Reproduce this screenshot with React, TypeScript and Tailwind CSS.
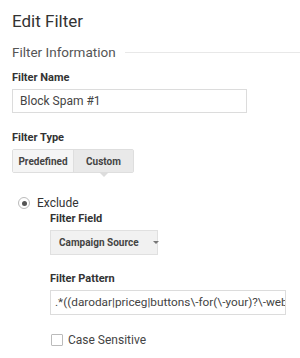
import React from "react";

const Label = ({ children, className = "" }: { children: React.ReactNode; className?: string }) => (
  <div className={`text-[11px] leading-[14px] font-bold text-[#333] ${className}`}>{children}</div>
);

export default function App() {
  return (
    <div className="w-[300px] h-[358px] overflow-hidden bg-white pl-3 pt-[11px] font-['Roboto',sans-serif]">
      <h1 className="text-[17px] leading-5 text-[#333]">Edit Filter</h1>

      <div className="mt-[13px] flex items-center h-4">
        <span className="text-[13.5px] leading-4 text-[#555]">Filter Information</span>
        <div className="ml-[9px] h-px flex-1 bg-[#e8e8e8]" />
      </div>

      <Label className="mt-[11px]">Filter Name</Label>
      <div className="mt-1 w-[235px] h-6 border border-[#dcdcdc] pl-[7px] text-[12px] leading-[22px] text-[#444]">
        Block Spam #1
      </div>

      <Label className="mt-[18px]">Filter Type</Label>
      <div className="mt-1 flex h-6 w-fit border border-[#dedede] rounded-[2px] text-[10px] font-bold text-[#444]">
        <div className="w-[60px] flex items-center justify-center bg-[#f5f5f5]">Predefined</div>
        <div className="relative w-[60px] flex items-center justify-center bg-[#e9e9e9] border-l border-[#dedede]">
          Custom
          <div className="absolute left-1/2 -translate-x-1/2 top-full w-0 h-0 border-l-[5px] border-r-[5px] border-t-[5px] border-l-transparent border-r-transparent border-t-[#dcdcdc]" />
        </div>
      </div>

      <div className="mt-[23px] ml-[6px] flex items-center h-[14px]">
        <div className="w-3 h-3 rounded-full border border-[#bbb] flex items-center justify-center">
          <div className="w-[5px] h-[5px] rounded-full bg-[#555]" />
        </div>
        <span className="ml-[7px] text-[12px] text-[#333]">Exclude</span>
      </div>

      <div className="ml-[38px]">
        <Label className="mt-[2px]">Filter Field</Label>
        <div className="mt-1 w-[108px] h-[25px] border border-[#e0e0e0] bg-[#f1f1f1] flex items-center pl-2 text-[10px] font-bold text-[#444] whitespace-nowrap">
          Campaign Source
          <div className="ml-[14px] w-0 h-0 border-l-[3px] border-r-[3px] border-t-[3px] border-l-transparent border-r-transparent border-t-[#777]" />
        </div>

        <Label className="mt-[17px]">Filter Pattern</Label>
        <div className="mt-1 w-[236px] h-[25px] border border-[#dcdcdc] overflow-hidden">
          <div className="pl-[4px] text-[11.8px] leading-[23px] text-[#444] whitespace-nowrap">
            .*((darodar|priceg|buttons\-for(\-your)?\-website|makemoneyonline)\.com)
          </div>
        </div>

        <div className="mt-[18px] flex items-center h-[14px]">
          <div className="w-3 h-3 border border-[#bbb] rounded-[1px] ml-px" />
          <span className="ml-[5px] text-[12px] text-[#444]">Case Sensitive</span>
        </div>
      </div>
    </div>
  );
}
